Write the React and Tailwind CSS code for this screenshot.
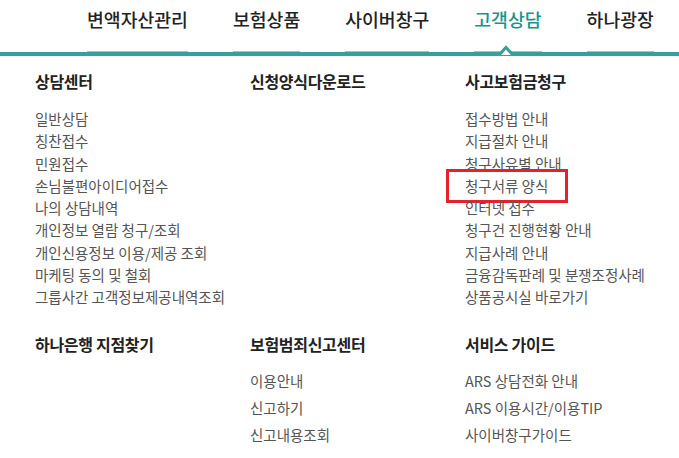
const navItems = ['변액자산관리', '보험상품', '사이버창구', '고객상담', '하나광장'];

const topSections = [
  {
    title: '상담센터',
    links: [
      '일반상담',
      '칭찬접수',
      '민원접수',
      '손님불편아이디어접수',
      '나의 상담내역',
      '개인정보 열람 청구/조회',
      '개인신용정보 이용/제공 조회',
      '마케팅 동의 및 철회',
      '그룹사간 고객정보제공내역조회',
    ],
  },
  { title: '신청양식다운로드', links: [] },
  {
    title: '사고보험금청구',
    links: [
      '접수방법 안내',
      '지급절차 안내',
      '청구사유별 안내',
      '청구서류 양식',
      '인터넷 접수',
      '청구건 진행현황 안내',
      '지급사례 안내',
      '금융감독판례 및 분쟁조정사례',
      '상품공시실 바로가기',
    ],
  },
];

const bottomSections = [
  { title: '하나은행 지점찾기', links: [] },
  { title: '보험범죄신고센터', links: ['이용안내', '신고하기', '신고내용조회'] },
  { title: '서비스 가이드', links: ['ARS 상담전화 안내', 'ARS 이용시간/이용TIP', '사이버창구가이드'] },
];

const font = { fontFamily: '"Noto Sans CJK KR", "Noto Sans", sans-serif' };

function Section({ title, links, leading, listGap }) {
  return (
    <div>
      <h3 className="text-[16px] font-bold text-[#222] leading-[20px] tracking-[-0.3px]">{title}</h3>
      <ul className={listGap}>
        {links.map((l) => (
          <li key={l} className={`relative text-[14.5px] text-[#555] ${leading}`}>
            {l}
            {l === '청구서류 양식' && (
              <span className="absolute left-[-19px] top-[-6px] w-[122px] h-[34px] border-[3px] border-[#e6212b]" />
            )}
          </li>
        ))}
      </ul>
    </div>
  );
}

export default function App() {
  return (
    <div className="w-[679px] h-[458px] bg-white overflow-hidden" style={font}>
      {/* top nav */}
      <div className="relative h-[56px]">
        <div className="flex pl-[87px] gap-[45px] h-[52px]">
          {navItems.map((n) => (
            <div
              key={n}
              className={`relative pt-[6px] text-[18.3px] font-medium border-b border-[#9fc4c2] ${
                n === '고객상담' ? 'text-[#16958f]' : 'text-[#222]'
              }`}
            >
              {n}
              {n === '고객상담' && (
                <svg className="absolute left-[25px] bottom-[-4px]" width="14" height="10" viewBox="0 0 14 10">
                  <polygon points="0,10 7,3 14,10" fill="#fff" />
                  <polyline points="0,10 7,2.5 14,10" fill="none" stroke="#34a09b" strokeWidth="3" />
                </svg>
              )}
            </div>
          ))}
        </div>
        <div className="h-[4px] bg-[#38a09b]" />
      </div>

      {/* mega menu */}
      <div className="pl-[35px] pt-[15px]">
        <div className="grid grid-cols-[215px_215px_1fr]">
          {topSections.map((s) => (
            <Section key={s.title} {...s} leading="leading-[22.3px]" listGap="mt-[17px]" />
          ))}
        </div>
        <div className="grid grid-cols-[215px_215px_1fr] mt-[25px]">
          {bottomSections.map((s) => (
            <Section key={s.title} {...s} leading="leading-[27px]" listGap="mt-[13px]" />
          ))}
        </div>
      </div>
    </div>
  );
}
